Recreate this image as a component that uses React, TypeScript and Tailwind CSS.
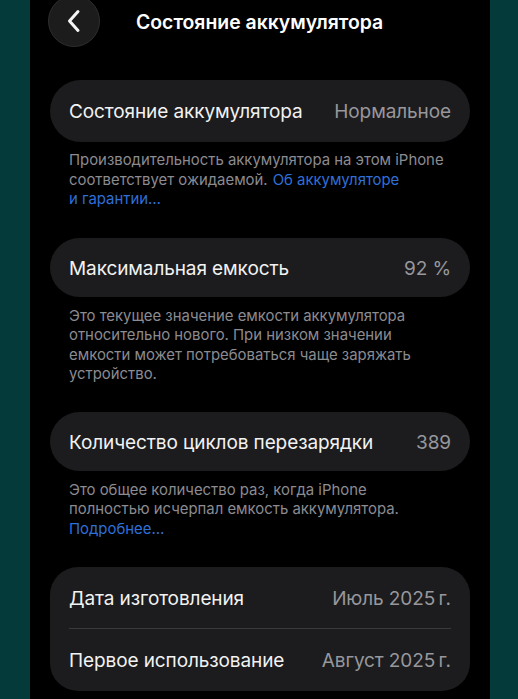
import React from "react";

const font = { fontFamily: "Inter, 'Noto Sans', sans-serif" };

function Row({ label, value, divider }: { label: string; value: string; divider?: boolean }) {
  return (
    <div className="relative flex h-[62px] items-center justify-between pl-[19px] pr-[19px] pt-[3px]">
      <span className="text-[19px] tracking-[-0.1px] text-[#f2f2f2]">{label}</span>
      <span className="text-[19px] tracking-[-0.1px] text-[#97979c]">{value}</span>
      {divider && <div className="absolute bottom-0 left-[19px] right-[19px] h-px bg-[#3a3a3c]" />}
    </div>
  );
}

function Note({ lines, className }: { lines: React.ReactNode[]; className?: string }) {
  return (
    <div className={"flex flex-col pl-[19px] text-[14.9px] leading-[19.5px] text-[#8b8b90] " + (className ?? "")}>
      {lines.map((l, i) => (
        <div key={i} className="flex whitespace-nowrap">
          {l}
        </div>
      ))}
    </div>
  );
}

export default function App() {
  const link = "text-[#2f6fd8]";
  return (
    <div className="flex h-[699px] w-[518px] overflow-hidden bg-[#04393a]" style={font}>
      <div className="w-[30px] shrink-0 bg-[#053a3b]" />
      <div className="flex w-[460px] shrink-0 flex-col bg-black pl-[20px] pr-[20px]">
        {/* header */}
        <div className="-mt-[5px] flex h-[52px] items-center">
          <div className="flex h-[52px] w-[52px] shrink-0 -ml-[2px] items-center justify-center rounded-full border border-[#2e2e2e] bg-[#1c1c1c]">
            <svg width="16" height="24" viewBox="0 0 16 24" fill="none">
              <path d="M12 2.5 L3.5 12 L12 21.5" stroke="#f5f5f5" strokeWidth="3" strokeLinecap="round" strokeLinejoin="round" />
            </svg>
          </div>
          <span className="ml-[36px] pt-[3px] text-[19.4px] font-semibold text-white">Состояние аккумулятора</span>
        </div>

        <div className="mt-[33px] overflow-hidden rounded-[31px] bg-[#1c1c1e]">
          <Row label="Состояние аккумулятора" value="Нормальное" />
        </div>
        <Note
          className="mt-[9px]"
          lines={[
            <span>Производительность аккумулятора на этом iPhone</span>,
            <>
              <span>соответствует ожидаемой.</span>
              <span className={"ml-[5px] " + link}>Об аккумуляторе</span>
            </>,
            <span className={link}>и гарантии…</span>,
          ]}
        />

        <div className="mt-[28px] overflow-hidden rounded-[30px] bg-[#1c1c1e]">
          <div className="h-[60px]">
            <div className="-mt-px">
              <Row label="Максимальная емкость" value="92 %" />
            </div>
          </div>
        </div>
        <Note
          className="mt-[10px]"
          lines={[
            <span>Это текущее значение емкости аккумулятора</span>,
            <span>относительно нового. При низком значении</span>,
            <span>емкости может потребоваться чаще заряжать</span>,
            <span>устройство.</span>,
          ]}
        />

        <div className="mt-[27px] overflow-hidden rounded-[30px] bg-[#1c1c1e]">
          <div className="h-[60px]">
            <div className="-mt-px">
              <Row label="Количество циклов перезарядки" value="389" />
            </div>
          </div>
        </div>
        <Note
          className="mt-[10px]"
          lines={[
            <span>Это общее количество раз, когда iPhone</span>,
            <span>полностью исчерпал емкость аккумулятора.</span>,
            <span className={link}>Подробнее…</span>,
          ]}
        />

        <div className="mt-[28px] overflow-hidden rounded-[28px] bg-[#1c1c1e]">
          <Row label="Дата изготовления" value={"Июль 2025\u202Fг."} divider />
          <Row label="Первое использование" value={"Август 2025\u202Fг."} />
        </div>
      </div>
      <div className="w-[28px] shrink-0 bg-[#053a3b]" />
    </div>
  );
}
